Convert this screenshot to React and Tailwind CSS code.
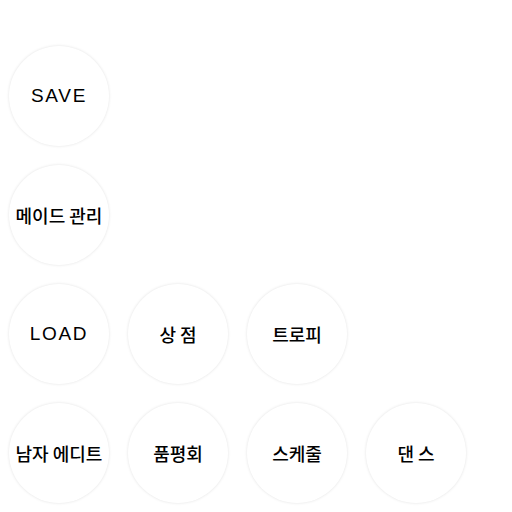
import React from 'react'

const rows = [
  [{ label: 'SAVE', latin: true }],
  [{ label: '메이드 관리' }],
  [{ label: 'LOAD', latin: true }, { label: '상 점' }, { label: '트로피' }],
  [{ label: '남자 에디트' }, { label: '품평회' }, { label: '스케줄' }, { label: '댄 스' }],
]

const Bubble = ({ label, latin }) => (
  <button
    className={
      'w-[100px] h-[100px] rounded-full bg-white flex items-center justify-center text-black shadow-[0_0_3px_rgba(0,0,0,0.12)] ' +
      (latin
        ? "text-[19px] tracking-[0.09em] font-['Liberation_Sans',sans-serif]"
        : "text-[18px] font-medium font-['Noto_Sans_CJK_KR','Noto_Sans',sans-serif] whitespace-nowrap")
    }
  >
    {label}
  </button>
)

const App = () => (
  <div className="w-[512px] h-[512px] bg-white pt-[46px] pl-[9px] flex flex-col gap-[19px] overflow-hidden">
    {rows.map((row, i) => (
      <div key={i} className="flex gap-[19px]">
        {row.map(b => <Bubble key={b.label} {...b} />)}
      </div>
    ))}
  </div>
)

export default App
